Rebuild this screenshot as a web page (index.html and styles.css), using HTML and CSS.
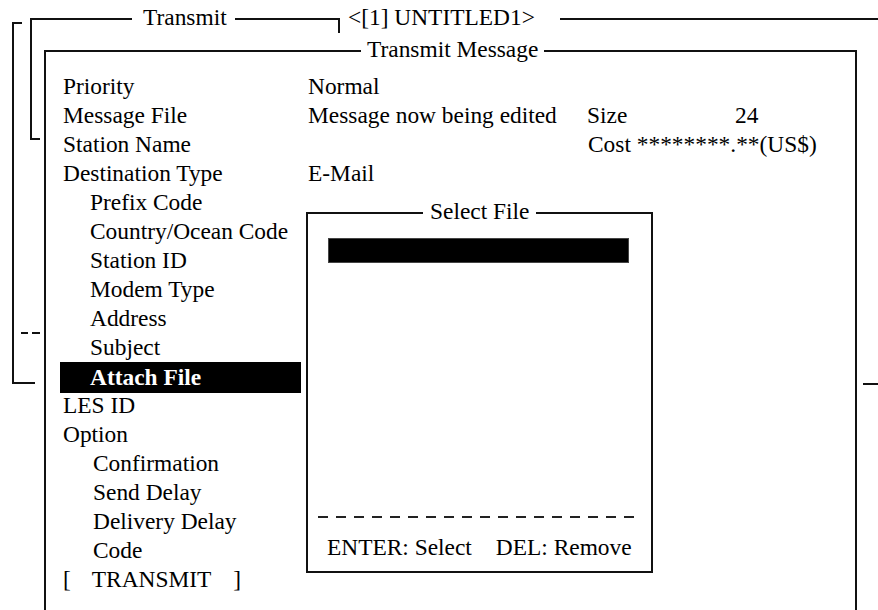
FILE: index.html
```html
<!DOCTYPE html>
<html lang="en">
<head>
    <meta charset="UTF-8">
    <meta name="viewport" content="width=device-width, initial-scale=1.0">
    <title>Transmit Message</title>
    <link rel="stylesheet" href="styles.css">
</head>
<body>
    <div class="screen">
        <!-- frames of the windows lying behind -->
        <svg class="back-lines" width="878" height="610" viewBox="0 0 878 610">
            <polyline points="22,23 13,23 13,383 35,383" />
            <line x1="863" y1="384" x2="878" y2="384" />
            <polyline points="40,139 31,139 31,19 132,19" />
            <polyline points="235,19 339,19 339,33" />
            <line x1="560" y1="19" x2="878" y2="19" />
            <line x1="21" y1="333" x2="28" y2="333" />
            <line x1="32" y1="333" x2="40" y2="333" />
        </svg>
        <span class="win-title title-transmit">Transmit</span>
        <span class="win-title title-untitled">&lt;[1] UNTITLED1&gt;</span>

        <div class="window main">
            <span class="frame-title main-title">Transmit Message</span>
            <ul class="menu">
                <li class="row"><span class="label">Priority</span><span class="value">Normal</span></li>
                <li class="row"><span class="label">Message File</span><span class="value">Message now being edited</span><span class="size">Size</span><span>24</span></li>
                <li class="row"><span class="label">Station Name</span><span class="value"></span><span class="cost">Cost ********.**(US$)</span></li>
                <li class="row"><span class="label">Destination Type</span><span class="value">E-Mail</span></li>
                <li class="row"><span class="label sub">Prefix Code</span></li>
                <li class="row"><span class="label sub">Country/Ocean Code</span></li>
                <li class="row"><span class="label sub">Station ID</span></li>
                <li class="row"><span class="label sub">Modem Type</span></li>
                <li class="row"><span class="label sub">Address</span></li>
                <li class="row"><span class="label sub">Subject</span></li>
                <li class="row selected"><span class="label sub">Attach File</span></li>
                <li class="row"><span class="label">LES ID</span></li>
                <li class="row"><span class="label">Option</span></li>
                <li class="row"><span class="label sub2">Confirmation</span></li>
                <li class="row"><span class="label sub2">Send Delay</span></li>
                <li class="row"><span class="label sub2">Delivery Delay</span></li>
                <li class="row"><span class="label sub2">Code</span></li>
                <li class="row"><span class="label command"><span>[</span><span class="cmd-name">TRANSMIT</span><span>]</span></span></li>
            </ul>

            <div class="popup">
                <span class="frame-title popup-title">Select File</span>
                <div class="file-bar"></div>
                <div class="dash"></div>
                <div class="keys"><span>ENTER: Select</span><span>DEL: Remove</span></div>
            </div>
        </div>
    </div>
</body>
</html>
```

FILE: styles.css
```css
body {
    margin: 0;
    background-color: #fff;
    color: #000;
    font-family: "Liberation Serif", "Times New Roman", serif;
    font-size: 23.4px;
}

.screen {
    position: relative;
    width: 878px;
    height: 610px;
    overflow: hidden;
    background-color: #fff;
}

.back-lines {
    position: absolute;
    left: 0;
    top: 0;
}

.back-lines polyline,
.back-lines line {
    fill: none;
    stroke: #111;
    stroke-width: 2;
}

.win-title {
    position: absolute;
    top: 5px;
    line-height: 24px;
    white-space: nowrap;
}

.title-transmit {
    left: 143px;
}

.title-untitled {
    left: 348px;
}

.window {
    position: absolute;
    box-sizing: border-box;
    border: 2px solid #111;
    background-color: #fff;
}

.main {
    left: 44px;
    top: 50px;
    width: 813px;
    height: 620px;
}

.frame-title {
    position: absolute;
    top: -15px;
    padding: 0 6px;
    line-height: 24px;
    background-color: #fff;
    white-space: nowrap;
}

.main-title {
    left: 315px;
}

.menu {
    list-style: none;
    margin: 0;
    padding: 20px 0 0 17px;
}

.row {
    display: flex;
    height: 29px;
    line-height: 29px;
    white-space: nowrap;
}

.label {
    box-sizing: border-box;
    width: 245px;
    flex: none;
}

.label.sub {
    padding-left: 27px;
}

.label.sub2 {
    padding-left: 30px;
}

.value {
    width: 279px;
    flex: none;
}

.size {
    width: 148px;
    flex: none;
}

.cost {
    margin-left: 1px;
}

.row.selected .label {
    width: 241px;
    height: 31px;
    margin-left: -3px;
    padding-left: 30px;
    background-color: #000;
    color: #fff;
    font-weight: bold;
    line-height: 30px;
}

.command {
    display: flex;
}

.cmd-name {
    margin: 0 22px 0 21px;
}

.popup {
    position: absolute;
    left: 260px;
    top: 160px;
    width: 347px;
    height: 361px;
    box-sizing: border-box;
    border: 2px solid #111;
    background-color: #fff;
    display: flex;
    flex-direction: column;
    padding: 24px 0 9px 20px;
}

.popup-title {
    left: 115px;
    padding: 0 7px;
}

.file-bar {
    width: 301px;
    height: 25px;
    box-sizing: border-box;
    background-color: #000;
    border: 1px solid #444;
}

.dash {
    margin: auto 0 15px -10px;
    width: 324px;
    height: 2px;
    background: repeating-linear-gradient(90deg, #222 0, #222 10px, transparent 10px, transparent 18px);
}

.keys {
    display: flex;
    gap: 24px;
    line-height: 29px;
    margin-left: -1px;
    white-space: nowrap;
}
```
